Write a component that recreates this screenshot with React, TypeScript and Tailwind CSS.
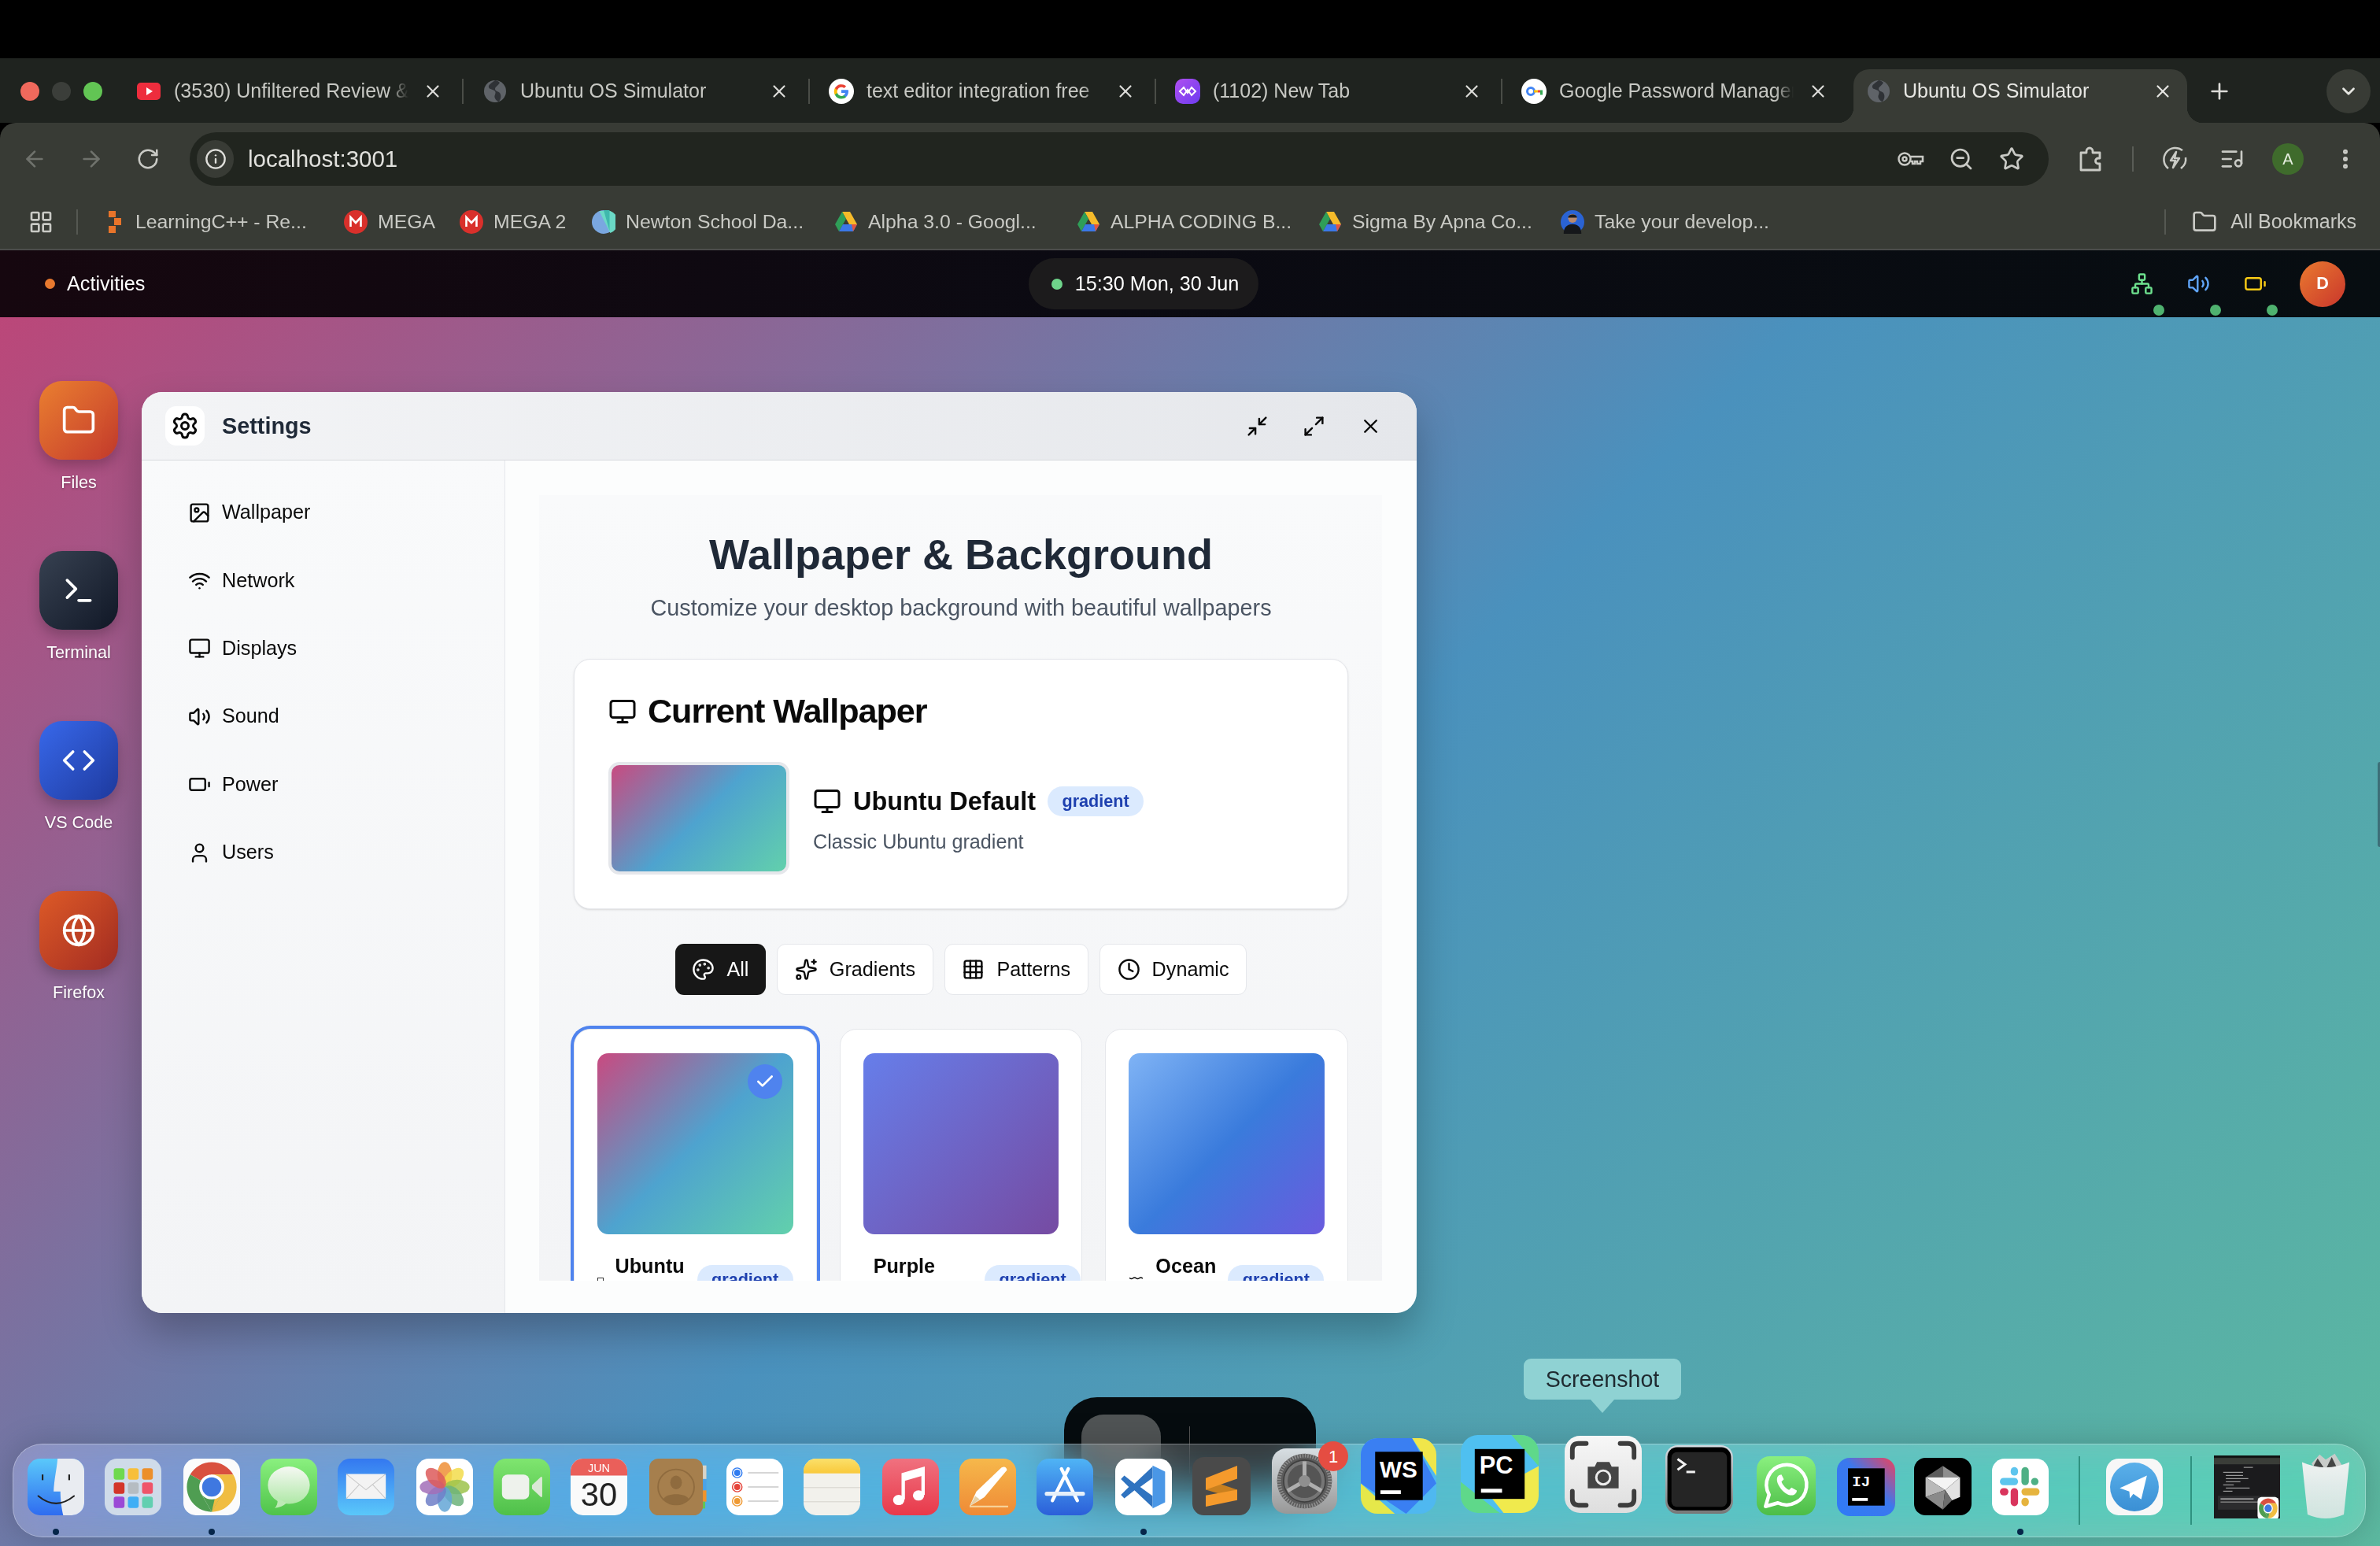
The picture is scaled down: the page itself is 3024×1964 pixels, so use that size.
import React from "react";
import {
  ArrowLeft, ArrowRight, RotateCw, Info, Star, ZoomOut, ListMusic, EllipsisVertical, Plus, X, ChevronDown,
  LayoutGrid, Folder, Network, Volume2, Battery, Terminal, Code, Globe, Settings, Minimize2, Maximize2,
  Image, Wifi, Monitor, User, Palette, Sparkles, Grid3x3, Clock, Check, Waves,
} from "lucide-react";

const S = ({ children }: { children: React.ReactNode }) => (
  <svg viewBox="0 0 100 100" preserveAspectRatio="none" className="block h-full w-full">{children}</svg>
);

const Yt = () => (
  <svg viewBox="0 0 30 30" className="h-[30px] w-[30px]"><rect x="0" y="4" width="30" height="22" rx="5" fill="#ee2d3d" /><path d="M12 10l8 5-8 5z" fill="#fff" /></svg>
);
const GlobeFav = () => (
  <svg viewBox="0 0 30 30" className="h-[30px] w-[30px]"><circle cx="15" cy="15" r="14" fill="#5f6368" /><path d="M15 1c-3 3-9 5-8 9 1 3 6 2 8 5s-2 5 0 9c1 2 3 4 5 4 3-4 3-8 1-11-2-2-6-2-6-5s4-4 6-8c-2-2-4-3-6-3z" fill="#2f3236" /></svg>
);
const GoogleFav = () => (
  <svg viewBox="0 0 32 32" className="h-[32px] w-[32px]"><circle cx="16" cy="16" r="16" fill="#fff" /><path d="M25 16.2c0-.7-.1-1.300-.2-1.900H16v3.600h5a4.300 4.300 0 0 1-1.900 2.800v2.300h3c1.800-1.600 2.900-4 2.900-6.800z" fill="#4285f4" /><path d="M16 25.500c2.500 0 4.600-.8 6.100-2.200l-3-2.300c-.8.600-1.900.9-3.100.9-2.400 0-4.400-1.600-5.100-3.800H7.800v2.400a9.200 9.200 0 0 0 8.200 5z" fill="#34a853" /><path d="M10.900 18.100a5.500 5.500 0 0 1 0-3.600v-2.400H7.800a9.200 9.200 0 0 0 0 8.400z" fill="#fbbc05" /><path d="M16 10.700c1.300 0 2.500.5 3.500 1.400l2.600-2.600A9.200 9.200 0 0 0 7.800 12.100l3.100 2.400c.7-2.200 2.700-3.800 5.100-3.800z" fill="#ea4335" /></svg>
);
const PurpleFav = () => (
  <svg viewBox="0 0 32 32" className="h-[32px] w-[32px]"><defs><linearGradient id="pf" x1="0" y1="0" x2="1" y2="1"><stop stopColor="#b04ff0" /><stop offset="1" stopColor="#6d3cf0" /></linearGradient></defs><rect width="32" height="32" rx="10" fill="url(#pf)" /><path d="M6 16l5-5 5 7 5-7 5 5-5 5-5-7-5 7z" fill="none" stroke="#fff" strokeWidth="2" /></svg>
);
const PwFav = () => (
  <svg viewBox="0 0 32 32" className="h-[32px] w-[32px]"><circle cx="16" cy="16" r="16" fill="#fff" /><circle cx="12" cy="16" r="4.500" fill="none" stroke="#4285f4" strokeWidth="3" /><rect x="16" y="14.500" width="5" height="3" fill="#fbbc05" /><rect x="21" y="14.500" width="3" height="3" fill="#ea4335" /><rect x="24" y="14.500" width="3" height="6" fill="#34a853" /></svg>
);

const Tab = ({ icon, text, last }: { icon: React.ReactNode; text: string; last?: boolean }) => (
  <div className="flex h-[56px] w-[440px] shrink-0 items-center pl-[24px]">
    <div className="flex w-[32px] shrink-0 justify-center">{icon}</div>
    <div className="ml-[16px] w-[298px] overflow-hidden whitespace-nowrap text-[25px] text-[#c7c8c3] [mask-image:linear-gradient(90deg,#000_92%,transparent)]">{text}</div>
    <X size={26} strokeWidth={2} className="ml-[18px] shrink-0 text-[#dcdcd8]" />
    <div className={last ? "ml-[24px] h-[32px] w-[2px]" : "ml-[24px] h-[32px] w-[2px] bg-[#4a4d47]"} />
  </div>
);

const TabStrip = () => (
  <div className="flex h-[82px] shrink-0 items-start bg-[#1f231f] pt-[14px]">
    <div className="flex h-[56px] items-center gap-[16px] pl-[26px]">
      <span className="h-[24px] w-[24px] rounded-full bg-[#f0695c]" />
      <span className="h-[24px] w-[24px] rounded-full bg-[#3b3e3a]" />
      <span className="h-[24px] w-[24px] rounded-full bg-[#62c554]" />
    </div>
    <div className="ml-[19px] flex">
      <Tab icon={<Yt />} text="(3530) Unfiltered Review & Analysis" />
      <Tab icon={<GlobeFav />} text="Ubuntu OS Simulator" />
      <Tab icon={<GoogleFav />} text="text editor integration free" />
      <Tab icon={<PurpleFav />} text="(1102) New Tab" />
      <Tab icon={<PwFav />} text="Google Password Manager" last />
    </div>
    <div className="relative ml-[6px] flex h-[68px] w-[424px] shrink-0 items-start rounded-t-[20px] bg-[#383b35] pl-[17px]">
      <span className="absolute -left-[20px] bottom-0 h-[20px] w-[20px] bg-[radial-gradient(circle_at_0_0,transparent_20px,#383b35_20.500px)]" />
      <span className="absolute -right-[20px] bottom-0 h-[20px] w-[20px] bg-[radial-gradient(circle_at_100%_0,transparent_20px,#383b35_20.500px)]" />
      <div className="flex h-[56px] items-center">
        <GlobeFav />
        <div className="ml-[16px] w-[300px] whitespace-nowrap text-[25px] text-[#e6e6e2]">Ubuntu OS Simulator</div>
        <X size={26} strokeWidth={2} className="ml-[17px] text-[#e6e6e2]" />
      </div>
    </div>
    <div className="ml-[25px] flex h-[56px] items-center"><Plus size={32} strokeWidth={2} className="text-[#dcdcd8]" /></div>
    <div className="ml-auto mr-[12px] flex h-[56px] w-[56px] items-center justify-center rounded-full bg-[#383b35]"><ChevronDown size={26} strokeWidth={2.500} className="text-[#e6e6e2]" /></div>
  </div>
);

const IconBox = ({ children, className }: { children: React.ReactNode; className?: string }) => (
  <div className={"flex h-[64px] w-[64px] shrink-0 items-center justify-center text-[#c9cac5] " + (className || "")}>{children}</div>
);

const KeyIcon = () => (
  <svg viewBox="0 0 36 36" className="h-[36px] w-[36px]" fill="none" stroke="currentColor" strokeWidth="2.500"><circle cx="10" cy="18" r="7.500" /><circle cx="10" cy="18" r="2.500" /><path d="M17.500 15H33v6h-3v3h-4v-3h-3v3h-3v-3h-2.500" /></svg>
);
const PuzzleIcon = () => (
  <svg viewBox="0 0 36 36" className="h-[36px] w-[36px]" fill="none" stroke="currentColor" strokeWidth="2.800"><path d="M6 10h7v-2a4 4 0 0 1 8 0v2h9v7h-2a3.500 3.500 0 0 0 0 7h2v8H6z" strokeLinejoin="round" /></svg>
);
const BoltIcon = () => (
  <svg viewBox="0 0 36 36" className="h-[36px] w-[36px]" fill="none" stroke="currentColor" strokeWidth="2.500"><path d="M10 30A14 14 0 0 1 28 7M26 30l1-1A14 14 0 0 0 32 16" /><path d="M20 9l-7 11h6l-3 9 8-12h-6z" strokeLinejoin="round" /></svg>
);

const Drive = () => (
  <svg viewBox="0 0 30 28" className="h-[28px] w-[30px]"><path d="M10 1h10l9 16H19z" fill="#f6bb2a" /><path d="M10 1L1 17l5 9 9-16z" fill="#2f9e58" /><path d="M6 26h18l5-9H11z" fill="#3b78e7" /><path d="M24 26l5-9h-7z" fill="#e4553f" /></svg>
);
const Mega = () => (
  <svg viewBox="0 0 30 30" className="h-[30px] w-[30px]"><circle cx="15" cy="15" r="15" fill="#d9302b" /><path d="M8.500 21V9l6.500 7 6.500-7v12" fill="none" stroke="#fff" strokeWidth="2.600" /></svg>
);
const Learn = () => (
  <svg viewBox="0 0 30 30" className="h-[30px] w-[30px]"><rect x="9" y="1" width="9" height="8" fill="#e8742a" /><rect x="16" y="10" width="9" height="9" fill="#e8742a" /><rect x="9" y="20" width="9" height="9" fill="#e8742a" /></svg>
);
const Newton = () => (
  <svg viewBox="0 0 32 32" className="h-[32px] w-[32px]"><circle cx="16" cy="16" r="16" fill="#7aa7e0" /><path d="M10 1L25 31a16 16 0 0 0 0-30z" fill="#6bd9c6" /><path d="M16 0h8v28z" fill="#3fb8ad" /></svg>
);
const Person = () => (
  <svg viewBox="0 0 32 32" className="h-[32px] w-[32px]"><circle cx="16" cy="16" r="16" fill="#2a63d4" /><path d="M4 32c0-9 5-13 12-13s12 4 12 13z" fill="#15171a" /><circle cx="16" cy="11" r="6" fill="#b98a6e" /><path d="M10 10c0-5 12-6 12 0z" fill="#1b1b1b" /></svg>
);

const Bm = ({ icon, text, className }: { icon: React.ReactNode; text: string; className: string }) => (
  <div className={"flex shrink-0 items-center " + className}>
    <div className="flex w-[30px] shrink-0 justify-center">{icon}</div>
    <span className="ml-[13px] whitespace-nowrap text-[24.800px] text-[#c9cac5]">{text}</span>
  </div>
);

const Toolbar = () => (
  <div className="h-[162px] shrink-0 rounded-t-[20px] border-b-2 border-[#4c4d4b] bg-[#383b35] pt-[12px]">
    <div className="flex h-[68px] items-center pl-[8px]">
      <div className="flex h-[64px] w-[72px] items-center justify-center text-[#6f726c]"><ArrowLeft size={32} strokeWidth={2} /></div>
      <div className="flex h-[64px] w-[72px] items-center justify-center text-[#6f726c]"><ArrowRight size={32} strokeWidth={2} /></div>
      <div className="flex h-[64px] w-[72px] items-center justify-center text-[#c9cac5]"><RotateCw size={30} strokeWidth={2} /></div>
      <div className="ml-[17px] flex h-[68px] w-[2362px] items-center rounded-full bg-[#21251f] pl-[9px] pr-[15px]">
        <div className="flex h-[48px] w-[47px] items-center justify-center rounded-full bg-[#383b35] text-[#e0e0dc]"><Info size={28} strokeWidth={2} /></div>
        <span className="ml-[18px] text-[29.500px] text-[#e0e0dc]">localhost:3001</span>
        <div className="ml-auto flex">
          <IconBox><KeyIcon /></IconBox>
          <IconBox><ZoomOut size={32} strokeWidth={2} /></IconBox>
          <IconBox><Star size={32} strokeWidth={2} /></IconBox>
        </div>
      </div>
      <IconBox className="ml-[21px]"><PuzzleIcon /></IconBox>
      <div className="ml-[21px] h-[32px] w-[2px] bg-[#5a5d57]" />
      <IconBox className="ml-[20px]"><BoltIcon /></IconBox>
      <IconBox className="ml-[9px]"><ListMusic size={32} strokeWidth={2} /></IconBox>
      <div className="ml-[19px] flex h-[40px] w-[40px] shrink-0 items-center justify-center rounded-full bg-[#3f6b2c] text-[20px] text-[#e6efe0]">A</div>
      <div className="ml-[33px] flex w-[40px] justify-center text-[#c9cac5]"><EllipsisVertical size={32} strokeWidth={2.500} /></div>
    </div>
    <div className="mt-[12px] flex h-[68px] items-center pl-[36px]">
      <LayoutGrid size={32} strokeWidth={2} className="text-[#c9cac5]" />
      <div className="ml-[29px] mr-[30px] h-[32px] w-[2px] bg-[#555852]" />
      <Bm className="w-[308px]" icon={<Learn />} text="LearningC++ - Re..." />
      <Bm className="w-[147px]" icon={<Mega />} text="MEGA" />
      <Bm className="w-[168px]" icon={<Mega />} text="MEGA 2" />
      <Bm className="w-[308px]" icon={<Newton />} text="Newton School Da..." />
      <Bm className="w-[308px]" icon={<Drive />} text="Alpha 3.0 - Googl..." />
      <Bm className="w-[307px]" icon={<Drive />} text="ALPHA CODING B..." />
      <Bm className="w-[308px]" icon={<Drive />} text="Sigma By Apna Co..." />
      <Bm className="w-[300px]" icon={<Person />} text="Take your develop..." />
      <div className="ml-auto h-[32px] w-[2px] bg-[#555852]" />
      <Folder size={32} strokeWidth={2} className="ml-[33px] text-[#c9cac5]" />
      <span className="ml-[17px] mr-[30px] text-[25px] text-[#c9cac5]">All Bookmarks</span>
    </div>
  </div>
);

const StatusIcon = ({ children }: { children: React.ReactNode }) => (
  <div className="relative flex h-[40px] w-[72px] items-center justify-center">
    {children}
    <span className="absolute left-[51px] top-[46px] h-[14px] w-[14px] rounded-full bg-[#4fb26f]" />
  </div>
);

const TopBar = () => (
  <div className="flex h-[85px] shrink-0 items-center justify-between bg-[linear-gradient(90deg,#16070f,#0b0a12_45%,#070d11)] pl-[57px] pr-[44px] text-white">
    <div className="flex items-center gap-[15px] pr-[36px] text-[25.200px]">
      <span className="h-[13px] w-[13px] rounded-full bg-[#e8792f]" />
      <span>Activities</span>
    </div>
    <div className="flex h-[65px] w-[292px] items-center rounded-full bg-[#1c1b1c] pl-[29px] text-[25.200px]">
      <span className="h-[14px] w-[14px] rounded-full bg-[#6fd58b]" />
      <span className="ml-[16px] whitespace-nowrap">15:30 Mon, 30 Jun</span>
    </div>
    <div className="flex items-center">
      <StatusIcon><Network size={29} strokeWidth={2} className="text-[#6ee28f]" /></StatusIcon>
      <StatusIcon><Volume2 size={29} strokeWidth={2} className="text-[#60a5fa]" /></StatusIcon>
      <StatusIcon><Battery size={29} strokeWidth={2} className="text-[#facc15]" /></StatusIcon>
      <div className="ml-[21px] flex h-[58px] w-[58px] items-center justify-center rounded-full bg-[linear-gradient(135deg,#ea7a2f,#c9362c)] text-[21.600px] font-bold">D</div>
    </div>
  </div>
);

const DeskIcon = ({ label, tile, children }: { label: string; tile: string; children: React.ReactNode }) => (
  <div className="flex w-[100px] flex-col items-center">
    <div className={"flex h-[100px] w-[100px] items-center justify-center rounded-[29px] text-white shadow-[0_8px_16px_rgba(0,0,0,0.22)] " + tile}>{children}</div>
    <div className="mt-[14px] h-[30px] whitespace-nowrap text-[21.600px] leading-[30px] text-white [text-shadow:0_1px_3px_rgba(0,0,0,0.35)]">{label}</div>
  </div>
);

const MenuItem = ({ icon, label }: { icon: React.ReactNode; label: string }) => (
  <div className="flex h-[86.400px] items-center gap-[14px] pl-[59px] text-[25.200px] text-[#0a0a0a]">
    {icon}
    <span>{label}</span>
  </div>
);

const FilterBtn = ({ icon, label, active }: { icon: React.ReactNode; label: string; active?: boolean }) => (
  <div className={active
    ? "flex h-[65px] items-center gap-[15px] rounded-[11px] bg-[#171717] px-[21.500px] text-[25.200px] text-white"
    : "flex h-[65px] items-center gap-[15px] rounded-[11px] border border-[#e5e7eb] bg-white px-[21.500px] text-[25.200px] text-[#0a0a0a]"}>
    {icon}
    <span>{label}</span>
  </div>
);

const Badge = ({ className }: { className?: string }) => (
  <div className={"flex h-[38px] w-[122px] shrink-0 items-center justify-center rounded-full bg-[#dbeafe] text-[21.600px] font-bold text-[#1e40af] " + (className || "")}>gradient</div>
);

const SettingsWindow = () => (
  <div className="absolute left-[180px] top-[95px] flex h-[1170px] w-[1620px] flex-col overflow-hidden rounded-[26px] bg-[#fcfdfd] shadow-[0_25px_50px_rgba(0,0,0,0.25)]">
    <div className="flex h-[87px] shrink-0 items-center border-b border-[#d8dade] bg-[linear-gradient(90deg,#f3f4f6,#e5e7eb)] pl-[30px] pr-[23px]">
      <div className="flex h-[50px] w-[50px] items-center justify-center rounded-[14px] bg-white text-[#0a0a0a]"><Settings size={36} strokeWidth={2} /></div>
      <div className="ml-[22px] pt-[2px] text-[28.800px] font-bold text-[#1f2937]">Settings</div>
      <div className="ml-auto flex text-[#0a0a0a]">
        <div className="flex w-[72px] justify-center"><Minimize2 size={29} strokeWidth={2} /></div>
        <div className="flex w-[72px] justify-center"><Maximize2 size={29} strokeWidth={2} /></div>
        <div className="flex w-[72px] justify-center"><X size={29} strokeWidth={2} /></div>
      </div>
    </div>
    <div className="flex min-h-0 flex-1">
      <div className="w-[462px] shrink-0 border-r border-[#e5e7eb] bg-[linear-gradient(180deg,#f9fafb,#f3f4f6)] pt-[23px]">
        <MenuItem icon={<Image size={29} strokeWidth={2} />} label="Wallpaper" />
        <MenuItem icon={<Wifi size={29} strokeWidth={2} />} label="Network" />
        <MenuItem icon={<Monitor size={29} strokeWidth={2} />} label="Displays" />
        <MenuItem icon={<Volume2 size={29} strokeWidth={2} />} label="Sound" />
        <MenuItem icon={<Battery size={29} strokeWidth={2} />} label="Power" />
        <MenuItem icon={<User size={29} strokeWidth={2} />} label="Users" />
      </div>
      <div className="flex min-w-0 flex-1 flex-col pb-[41px] pl-[43px] pr-[44px] pt-[44px]">
        <div className="min-h-0 flex-1 overflow-hidden bg-[linear-gradient(180deg,#f9fafb,#f3f4f6)] pl-[44px] pr-[43px] pt-[43px]">
          <h1 className="text-center text-[54px] font-bold leading-[65px] text-[#1f2937]">Wallpaper &amp; Background</h1>
          <p className="mt-[13px] text-center text-[28.800px] leading-[44px] text-[#4b5563]">Customize your desktop background with beautiful wallpapers</p>
          <div className="mt-[43px] h-[318px] rounded-[21px] border border-[#e5e7eb] bg-white pl-[43px] pt-[44px] shadow-sm">
            <div className="flex h-[43px] items-center gap-[14px]">
              <Monitor size={36} strokeWidth={2} className="text-[#0a0a0a]" />
              <span className="text-[43.200px] font-bold leading-[43px] tracking-tight text-[#0a0a0a]">Current Wallpaper</span>
            </div>
            <div className="mt-[43px] flex gap-[30px]">
              <div className="h-[143px] w-[230px] rounded-[14px] border-[4px] border-[#e5e7eb] bg-[linear-gradient(135deg,#c94a80,#4ea3cf_50%,#62d0ac)]" />
              <div className="pt-[31px]">
                <div className="flex h-[38px] items-center">
                  <Monitor size={36} strokeWidth={2} className="text-[#0a0a0a]" />
                  <span className="ml-[15px] text-[32.400px] font-bold text-[#0a0a0a]">Ubuntu Default</span>
                  <Badge className="ml-[15px]" />
                </div>
                <div className="mt-[14px] text-[25.200px] leading-[36px] text-[#4b5563]">Classic Ubuntu gradient</div>
              </div>
            </div>
          </div>
          <div className="mt-[44px] flex justify-center gap-[14.400px]">
            <FilterBtn active icon={<Palette size={29} strokeWidth={2} />} label="All" />
            <FilterBtn icon={<Sparkles size={29} strokeWidth={2} />} label="Gradients" />
            <FilterBtn icon={<Grid3x3 size={29} strokeWidth={2} />} label="Patterns" />
            <FilterBtn icon={<Clock size={29} strokeWidth={2} />} label="Dynamic" />
          </div>
          <div className="mt-[43px] grid grid-cols-3 gap-[29px]">
            <div className="h-[400px] rounded-[21px] border border-[#e5e7eb] bg-white px-[29px] pt-[30px] ring-4 ring-[#4f83ee]">
              <div className="relative h-[230px] rounded-[14px] bg-[linear-gradient(135deg,#c94a80,#4ea3cf_50%,#62d0ac)]">
                <div className="absolute right-[14px] top-[14px] flex h-[44px] w-[44px] items-center justify-center rounded-full bg-[#4f83ee] text-white"><Check size={26} strokeWidth={2.500} /></div>
              </div>
              <div className="mt-[24px] flex items-start">
                <div className="mt-[31px] h-[14px] w-[8px] border border-[#333]" />
                <span className="ml-[15px] text-[25.200px] font-bold leading-[32px] text-[#0a0a0a]">Ubuntu</span>
                <Badge className="ml-[16px] mt-[15px]" />
              </div>
            </div>
            <div className="h-[400px] rounded-[21px] border border-[#e5e7eb] bg-white px-[29px] pt-[30px]">
              <div className="h-[230px] rounded-[14px] bg-[linear-gradient(135deg,#667eea,#764ba2)]" />
              <div className="mt-[24px] flex items-start">
                <span className="ml-[13px] text-[25.200px] font-bold leading-[32px] text-[#0a0a0a]">Purple</span>
                <Badge className="ml-[63px] mt-[15px]" />
              </div>
            </div>
            <div className="h-[400px] rounded-[21px] border border-[#e5e7eb] bg-white px-[29px] pt-[30px]">
              <div className="h-[230px] rounded-[14px] bg-[linear-gradient(135deg,#7fb3f5,#3a7bdc_50%,#6a5bde)]" />
              <div className="mt-[24px] flex items-start">
                <Waves size={19} strokeWidth={2} className="mt-[27px] text-[#0a0a0a]" />
                <span className="ml-[15px] text-[25.200px] font-bold leading-[32px] text-[#0a0a0a]">Ocean</span>
                <Badge className="ml-[15px] mt-[15px]" />
              </div>
            </div>
          </div>
        </div>
      </div>
    </div>
  </div>
);

const ChromeLogo = () => (
  <>
    <path d="M12 28A44 44 0 0 1 88 28L50 28 31 39z" fill="#d9503f" />
    <path d="M12 28L31 39V61L50 94A44 44 0 0 1 12 28z" fill="#4f9d52" />
    <path d="M88 28L50 28 69 61 50 94A44 44 0 0 0 88 28z" fill="#f0bd42" />
    <path d="M31 61L50 94 69 61 50 40z" fill="#4f9d52" />
    <path d="M69 61L50 94 60 50z" fill="#f0bd42" />
    <circle cx="50" cy="50" r="22" fill="#fff" />
    <circle cx="50" cy="50" r="17" fill="#3f78e0" />
  </>
);

const dockFont = "'Liberation Sans', Arial, sans-serif";

const Finder = () => (
  <S>
    <defs><linearGradient id="fi" x1="0" y1="0" x2="0" y2="1"><stop stopColor="#5ac8fa" /><stop offset="1" stopColor="#2f6cf0" /></linearGradient></defs>
    <rect width="100" height="100" rx="22" fill="url(#fi)" />
    <path d="M53 0H78A22 22 0 0 1 100 22V78A22 22 0 0 1 78 100H63C60 88 58 72 58 58H46C47 36 52 16 53 0Z" fill="#e9ecf1" />
    <rect x="25" y="28" width="3" height="10" fill="#222" /><rect x="72" y="28" width="3" height="10" fill="#222" />
    <path d="M19 66Q50 92 82 66" fill="none" stroke="#222" strokeWidth="3" strokeLinecap="round" />
  </S>
);
const Launchpad = () => {
  const c = ["#6fd94f", "#f7bf3a", "#ec8f2a", "#d3352a", "#b5bcc2", "#ef5469", "#9b4ad6", "#40aef5", "#62cfb0"];
  return (
    <S>
      <rect width="100" height="100" rx="22" fill="#cfdbe9" />
      {c.map((f, i) => <rect key={f} x={16 + (i % 3) * 25} y={17 + Math.floor(i / 3) * 25} width="19" height="20" rx="4" fill={f} />)}
    </S>
  );
};
const ChromeIcon = () => (<S><rect width="100" height="100" rx="22" fill="#fbfbfb" /><ChromeLogo /></S>);
const Messages = () => (
  <S>
    <defs><linearGradient id="me" x1="0" y1="0" x2="0" y2="1"><stop stopColor="#8af07f" /><stop offset="1" stopColor="#4fc34a" /></linearGradient><linearGradient id="me2" x1="0" y1="0" x2="0" y2="1"><stop stopColor="#f6f8f3" /><stop offset="1" stopColor="#aee8a6" /></linearGradient></defs>
    <rect width="100" height="100" rx="22" fill="url(#me)" />
    <ellipse cx="50" cy="47" rx="37" ry="33" fill="url(#me2)" />
    <path d="M30 70Q31 82 25 87Q38 86 46 78Z" fill="#bdeab5" />
  </S>
);
const Mail = () => (
  <S>
    <defs><linearGradient id="ma" x1="0" y1="0" x2="0" y2="1"><stop stopColor="#3478f0" /><stop offset="1" stopColor="#5ac8fa" /></linearGradient></defs>
    <rect width="100" height="100" rx="22" fill="url(#ma)" />
    <rect x="15" y="27" width="70" height="44" rx="3" fill="#f3f3f3" />
    <path d="M15 27L50 55 85 27M15 71L38 46M85 71L62 46" fill="none" stroke="#c9c9c9" strokeWidth="1.500" />
  </S>
);
const Photos = () => {
  const c = ["#ee8f36", "#f2dc4b", "#9cc34b", "#6cb37a", "#64a6d6", "#6f7fc8", "#a26fb8", "#dd5b5b"];
  return (
    <S>
      <rect width="100" height="100" rx="22" fill="#fff" />
      {c.map((f, i) => <ellipse key={f} cx="50" cy="28" rx="13" ry="22" fill={f} opacity="0.85" transform={`rotate(${i * 45} 50 50)`} />)}
    </S>
  );
};
const Facetime = () => (
  <S>
    <defs><linearGradient id="ft" x1="0" y1="0" x2="0" y2="1"><stop stopColor="#7fe56f" /><stop offset="1" stopColor="#4fc04a" /></linearGradient></defs>
    <rect width="100" height="100" rx="22" fill="url(#ft)" />
    <rect x="15" y="28" width="48" height="44" rx="10" fill="#eef2ec" />
    <path d="M68 47L84 32Q86 31 86 35V65Q86 69 84 68L68 53Z" fill="#dbe8d6" />
  </S>
);
const Calendar = () => (
  <S>
    <rect width="100" height="100" rx="22" fill="#fafafa" />
    <path d="M0 30V22A22 22 0 0 1 22 0H78A22 22 0 0 1 100 22V30Z" fill="#ea5f5a" />
    <text x="50" y="24" textAnchor="middle" fontSize="20" fill="#fff" fontFamily={dockFont}>JUN</text>
    <text x="50" y="84" textAnchor="middle" fontSize="58" fill="#222" fontFamily={dockFont}>30</text>
  </S>
);
const Contacts = () => (
  <S>
    <rect x="86" y="12" width="12" height="24" fill="#d8d4c8" /><rect x="86" y="36" width="12" height="20" fill="#4aa3e8" /><rect x="86" y="56" width="12" height="20" fill="#f0932c" /><rect x="86" y="76" width="10" height="12" fill="#62c554" />
    <rect width="92" height="100" rx="16" fill="#a67f4d" />
    <circle cx="46" cy="50" r="31" fill="none" stroke="#8f6b3e" strokeWidth="2.500" />
    <ellipse cx="46" cy="42" rx="10" ry="12" fill="#8f6b3e" />
    <path d="M24 72C28 60 64 60 68 72A31 31 0 0 1 24 72Z" fill="#8f6b3e" />
  </S>
);
const Reminders = () => (
  <S>
    <rect width="100" height="100" rx="22" fill="#fff" />
    {[["#2f7bf0", 25], ["#e5443a", 50], ["#ef9a34", 75]].map(([f, y]) => (
      <g key={String(y)}><circle cx="19" cy={y as number} r="8.500" fill="#fff" stroke={f as string} strokeWidth="2" /><circle cx="19" cy={y as number} r="5.500" fill={f as string} /><rect x="38" y={(y as number) - 1} width="54" height="2" fill="#c6c6c6" /></g>
    ))}
  </S>
);
const Notes = () => (
  <S>
    <defs><linearGradient id="no" x1="0" y1="0" x2="0" y2="1"><stop stopColor="#fbe06a" /><stop offset="1" stopColor="#f9c93b" /></linearGradient></defs>
    <rect width="100" height="100" rx="22" fill="#f2f1ec" />
    <path d="M0 26V22A22 22 0 0 1 22 0H78A22 22 0 0 1 100 22V26Z" fill="url(#no)" />
    <rect y="50" width="100" height="2" fill="#dedcd6" /><rect y="75" width="100" height="2" fill="#dedcd6" />
  </S>
);
const Music = () => (
  <S>
    <defs><linearGradient id="mu" x1="0" y1="0" x2="0" y2="1"><stop stopColor="#f0717f" /><stop offset="1" stopColor="#e8394a" /></linearGradient></defs>
    <rect width="100" height="100" rx="22" fill="url(#mu)" />
    <path d="M37 72V28L72 18V64" fill="none" stroke="#fff" strokeWidth="6" />
    <path d="M37 28L72 18V30L37 40Z" fill="#fff" />
    <ellipse cx="29" cy="73" rx="10" ry="9" fill="#fff" /><ellipse cx="64" cy="65" rx="10" ry="9" fill="#fff" />
  </S>
);
const Pages = () => (
  <S>
    <defs><linearGradient id="pa" x1="0" y1="0" x2="0" y2="1"><stop stopColor="#f6b84b" /><stop offset="1" stopColor="#ef8a36" /></linearGradient></defs>
    <rect width="100" height="100" rx="22" fill="url(#pa)" />
    <path d="M18 84L30 58 74 16Q82 12 84 20L44 68Z" fill="#fff" />
    <path d="M18 84L28 66 36 72Z" fill="#e6d0a5" />
    <rect x="18" y="83" width="68" height="3" fill="#f8d39a" />
  </S>
);
const AppStore = () => (
  <S>
    <defs><linearGradient id="as" x1="0" y1="0" x2="0" y2="1"><stop stopColor="#4fb4f5" /><stop offset="1" stopColor="#2b5fd9" /></linearGradient></defs>
    <rect width="100" height="100" rx="22" fill="url(#as)" />
    <path d="M44 18L72 74M56 18L28 74" stroke="#fff" strokeWidth="6" strokeLinecap="round" />
    <path d="M18 62H82" stroke="#e6f0fa" strokeWidth="7" strokeLinecap="round" />
  </S>
);
const VsCode = () => (
  <S>
    <rect width="100" height="100" rx="22" fill="#fff" />
    <path d="M66 14L34 44 16 30 10 36 24 50 10 64 16 70 34 56 66 86V66L44 50 66 34Z" fill="#2f73c0" />
    <path d="M66 12L88 23V77L66 88Z" fill="#4a97e6" />
  </S>
);
const Sublime = () => (
  <S>
    <rect width="100" height="100" rx="20" fill="#4a4a4a" />
    <path d="M23 38L77 56V72L23 56Z" fill="#c9801f" />
    <path d="M77 15L23 36V56L77 37Z" fill="#f59a2c" />
    <path d="M77 56L23 66V85L77 74Z" fill="#f59a2c" />
  </S>
);
const SysPrefs = () => (
  <S>
    <defs><linearGradient id="sy" x1="0" y1="0" x2="0" y2="1"><stop stopColor="#d7dee2" /><stop offset="1" stopColor="#989898" /></linearGradient></defs>
    <rect width="100" height="100" rx="22" fill="url(#sy)" />
    <circle cx="50" cy="50" r="42" fill="#5b5b5b" />
    <circle cx="50" cy="50" r="39" fill="none" stroke="#8e8e8e" strokeWidth="6" strokeDasharray="2 2" />
    <circle cx="50" cy="50" r="32" fill="#767676" stroke="#3f3f3f" strokeWidth="2" />
    <circle cx="50" cy="50" r="26" fill="#555" />
    <path d="M50 50V20M50 50L24 65M50 50L76 65" stroke="#aeaeae" strokeWidth="6" />
    <circle cx="50" cy="50" r="9" fill="#8f8f8f" />
  </S>
);
const Ws = () => (
  <S>
    <defs><clipPath id="wc"><rect width="100" height="100" rx="22" /></clipPath></defs>
    <g clipPath="url(#wc)">
      <rect width="100" height="100" fill="#4fb8f0" />
      <path d="M0 0H68L100 60 60 100 0 60Z" fill="#3a7ff2" />
      <path d="M68 0H100V50Z" fill="#f0e64a" />
      <path d="M0 60L45 100H0Z" fill="#e6e84a" />
    </g>
    <rect x="19" y="18" width="63" height="64" fill="#000" />
    <text x="50" y="52" textAnchor="middle" fontSize="31" fontWeight="700" fill="#fff" fontFamily={dockFont}>WS</text>
    <rect x="26" y="69" width="27" height="5" fill="#fff" />
  </S>
);
const Pc = () => (
  <S>
    <defs><clipPath id="pc"><rect width="100" height="100" rx="22" /></clipPath></defs>
    <g clipPath="url(#pc)">
      <rect width="100" height="100" fill="#4fc0f0" />
      <path d="M65 0H100V40Z" fill="#5fd88a" />
      <path d="M100 40V100H55L35 75Z" fill="#f0ea4d" />
      <path d="M0 60L50 100H0Z" fill="#5fd88a" />
    </g>
    <rect x="18" y="18" width="64" height="64" fill="#000" />
    <text x="24" y="50" fontSize="31" fontWeight="700" fill="#fff" fontFamily={dockFont}>PC</text>
    <rect x="26" y="69" width="27" height="5" fill="#fff" />
  </S>
);
const Shot = () => (
  <S>
    <defs><linearGradient id="sh" x1="0" y1="0" x2="0" y2="1"><stop stopColor="#f7f7f7" /><stop offset="1" stopColor="#dedede" /></linearGradient></defs>
    <rect width="100" height="100" rx="20" fill="url(#sh)" />
    <path d="M10 28V18Q10 10 18 10H28M72 10H82Q90 10 90 18V28M10 72V82Q10 90 18 90H28M72 90H82Q90 90 90 82V72" fill="none" stroke="#3d3d3d" strokeWidth="6" strokeLinecap="round" />
    <path d="M30 40H39L42 34H58L61 40H70V68H30Z" fill="#454545" />
    <circle cx="50" cy="54" r="9" fill="none" stroke="#ededed" strokeWidth="3" />
  </S>
);
const TermDock = () => (
  <S>
    <defs><linearGradient id="te" x1="0" y1="0" x2="0" y2="1"><stop stopColor="#d5dce2" /><stop offset="1" stopColor="#777" /></linearGradient></defs>
    <rect width="100" height="100" rx="18" fill="url(#te)" />
    <rect x="3" y="3" width="94" height="92" rx="14" fill="#000" />
    <rect x="9" y="10" width="82" height="80" rx="8" fill="#252525" />
    <path d="M18 20L29 28 18 36" fill="none" stroke="#f2f2f2" strokeWidth="3.500" />
    <path d="M31 39H44" stroke="#f2f2f2" strokeWidth="3.500" />
  </S>
);
const WhatsApp = () => (
  <S>
    <defs><linearGradient id="wa" x1="0" y1="0" x2="0" y2="1"><stop stopColor="#8af07f" /><stop offset="1" stopColor="#4cbd47" /></linearGradient></defs>
    <rect width="100" height="100" rx="22" fill="url(#wa)" />
    <path d="M15 85L21 65A34 34 0 1 1 36 79Z" fill="none" stroke="#fff" strokeWidth="6" strokeLinejoin="round" />
    <path d="M38 32c-5 3-5 11 1 20 6 10 15 15 22 14 4-1 7-4 7-8l-9-5-4 4c-4-1-11-8-13-14l4-4-4-8z" fill="#fff" />
  </S>
);
const Ij = () => (
  <S>
    <defs><linearGradient id="ij" x1="0" y1="1" x2="1" y2="0"><stop stopColor="#2f7bf6" /><stop offset="0.55" stopColor="#3b78ee" /><stop offset="1" stopColor="#f0415a" /></linearGradient></defs>
    <rect width="100" height="100" rx="22" fill="url(#ij)" />
    <rect x="19" y="18" width="63" height="64" fill="#000" />
    <text x="26" y="49" fontSize="26" fontWeight="700" fill="#fff" fontFamily="'Liberation Mono', monospace">IJ</text>
    <rect x="26" y="69" width="27" height="5" fill="#fff" />
  </S>
);
const Gem = () => (
  <S>
    <rect width="100" height="100" rx="20" fill="#000" />
    <path d="M50 14L20 34H50Z" fill="#5c5c5c" />
    <path d="M50 14L80 34H50Z" fill="#8e8e8e" />
    <path d="M20 34H80L54 56Z" fill="#f4f4f4" />
    <path d="M20 34L54 56 20 68Z" fill="#b9b9b9" />
    <path d="M80 34L54 56 66 74 80 68Z" fill="#e2e2e2" />
    <path d="M20 68L54 56 50 90Z" fill="#8a8a8a" />
    <path d="M54 56L66 74 50 90Z" fill="#6d6d6d" />
  </S>
);
const Slack = () => (
  <S>
    <rect width="100" height="100" rx="22" fill="#fff" />
    <rect x="14" y="34" width="32" height="13" rx="6.500" fill="#5ec5ee" /><rect x="33" y="15" width="13" height="15" rx="6.500" fill="#5ec5ee" />
    <rect x="52" y="15" width="13" height="32" rx="6.500" fill="#4eb085" /><rect x="69" y="34" width="13" height="13" rx="6.500" fill="#4eb085" />
    <rect x="33" y="52" width="13" height="32" rx="6.500" fill="#d9355d" /><rect x="14" y="52" width="15" height="13" rx="6.500" fill="#d9355d" />
    <rect x="52" y="52" width="32" height="13" rx="6.500" fill="#e6b43e" /><rect x="52" y="69" width="13" height="15" rx="6.500" fill="#e6b43e" />
  </S>
);
const Telegram = () => (
  <S>
    <defs><linearGradient id="tg" x1="0" y1="0" x2="0" y2="1"><stop stopColor="#5ab0ea" /><stop offset="1" stopColor="#3a8fd4" /></linearGradient></defs>
    <rect width="100" height="100" rx="22" fill="#f7f7f7" />
    <circle cx="50" cy="50" r="43" fill="url(#tg)" />
    <path d="M24 52L72 30 62 72 48 62 42 70 41 58Z" fill="#fff" />
  </S>
);
const Thumb = () => (
  <S>
    <rect width="100" height="100" fill="#1b1b1d" />
    <rect width="100" height="3" fill="#111" />
    <rect y="4" width="100" height="10" fill="#3a3d38" />
    <rect x="45" y="18" width="14" height="2" fill="#777" />
    <g fill="#9a9a9a">
      <rect x="14" y="26" width="30" height="1.500" /><rect x="18" y="31" width="26" height="1.500" /><rect x="18" y="36" width="34" height="1.500" /><rect x="18" y="41" width="22" height="1.500" /><rect x="14" y="46" width="16" height="1.500" /><rect x="18" y="51" width="36" height="1.500" /><rect x="14" y="56" width="14" height="1.500" />
    </g>
    <rect x="6" y="64" width="88" height="22" fill="#2c2c2e" />
    <rect x="10" y="68" width="50" height="2" fill="#aaa" />
    <rect x="10" y="73" width="60" height="2" fill="#777" />
    <g transform="translate(66 66) scale(0.32 0.36)"><rect width="100" height="100" rx="18" fill="#fff" /><ChromeLogo /></g>
  </S>
);
const Trash = () => (
  <S>
    <defs><linearGradient id="tr" x1="0" y1="0" x2="0" y2="1"><stop stopColor="#eef1f1" /><stop offset="1" stopColor="#e4e7e6" stopOpacity="0.85" /></linearGradient></defs>
    <path d="M22 16L38 2 50 10 68 1 82 18 70 26H30Z" fill="#c9cbc9" />
    <path d="M34 8L46 22H24ZM62 6L72 22H52Z" fill="#444" />
    <path d="M3 14Q50 30 97 14L86 94Q50 106 14 94Z" fill="url(#tr)" />
  </S>
);

const DockIcon = ({ className, dot, children }: { className: string; dot?: boolean; children: React.ReactNode }) => (
  <div className={"relative shrink-0 " + className}>
    {children}
    {dot && <span className="absolute -bottom-[25px] left-1/2 h-[8px] w-[8px] -translate-x-1/2 rounded-full bg-[#06264a]" />}
  </div>
);

const Dock = () => (
  <div className="absolute left-[16px] top-[1431px] flex h-[119px] w-[2990px] items-end rounded-[38px] border border-white/30 bg-white/20 pb-[27px] pl-[18px] shadow-[0_0_40px_rgba(0,0,0,0.18)] backdrop-blur-[28px] backdrop-saturate-[1.6]">
    <DockIcon dot className="h-[72px] w-[72px]"><Finder /></DockIcon>
    <DockIcon className="ml-[26px] h-[72px] w-[72px]"><Launchpad /></DockIcon>
    <DockIcon dot className="ml-[28px] h-[72px] w-[72px]"><ChromeIcon /></DockIcon>
    <DockIcon className="ml-[26px] h-[72px] w-[72px]"><Messages /></DockIcon>
    <DockIcon className="ml-[26px] h-[72px] w-[72px]"><Mail /></DockIcon>
    <DockIcon className="ml-[28px] h-[72px] w-[72px]"><Photos /></DockIcon>
    <DockIcon className="ml-[26px] h-[72px] w-[72px]"><Facetime /></DockIcon>
    <DockIcon className="ml-[26px] h-[72px] w-[72px]"><Calendar /></DockIcon>
    <DockIcon className="ml-[28px] h-[72px] w-[74px]"><Contacts /></DockIcon>
    <DockIcon className="ml-[24px] h-[72px] w-[72px]"><Reminders /></DockIcon>
    <DockIcon className="ml-[26px] h-[72px] w-[72px]"><Notes /></DockIcon>
    <DockIcon className="ml-[28px] h-[72px] w-[72px]"><Music /></DockIcon>
    <DockIcon className="ml-[26px] h-[72px] w-[72px]"><Pages /></DockIcon>
    <DockIcon className="ml-[26px] h-[72px] w-[72px]"><AppStore /></DockIcon>
    <DockIcon dot className="ml-[28px] h-[72px] w-[72px]"><VsCode /></DockIcon>
    <DockIcon className="ml-[26px] h-[74px] w-[74px]"><Sublime /></DockIcon>
    <DockIcon className="mb-[2px] ml-[27px] h-[83px] w-[83px]">
      <SysPrefs />
      <span className="absolute -right-[14px] -top-[9px] flex h-[38px] w-[38px] items-center justify-center rounded-full bg-[#e54d42] text-[22px] text-white">1</span>
    </DockIcon>
    <DockIcon className="mb-[2px] ml-[30px] h-[96px] w-[96px]"><Ws /></DockIcon>
    <DockIcon className="mb-[3px] ml-[31px] h-[99px] w-[99px]"><Pc /></DockIcon>
    <DockIcon className="mb-[3px] ml-[33px] h-[98px] w-[98px]"><Shot /></DockIcon>
    <DockIcon className="mb-[2px] ml-[30px] h-[87px] w-[86px]"><TermDock /></DockIcon>
    <DockIcon className="ml-[30px] h-[75px] w-[75px]"><WhatsApp /></DockIcon>
    <DockIcon className="-mb-[1px] ml-[27px] h-[74px] w-[74px]"><Ij /></DockIcon>
    <DockIcon className="ml-[24px] h-[73px] w-[73px]"><Gem /></DockIcon>
    <DockIcon dot className="ml-[26px] h-[72px] w-[72px]"><Slack /></DockIcon>
    <div className="-mb-[12px] ml-[38px] h-[87px] w-[2px] shrink-0 bg-[#2f9280]" />
    <DockIcon className="ml-[33px] h-[72px] w-[72px]"><Telegram /></DockIcon>
    <div className="-mb-[12px] ml-[35px] h-[87px] w-[2px] shrink-0 bg-[#2f9280]" />
    <DockIcon className="-mb-[4px] ml-[28px] h-[80px] w-[84px]"><Thumb /></DockIcon>
    <DockIcon className="-mb-[4px] ml-[26px] h-[83px] w-[64px]"><Trash /></DockIcon>
  </div>
);

export default function App() {
  return (
    <div className="flex h-[1964px] w-[3024px] flex-col overflow-hidden bg-black font-['Liberation_Sans',Arial,sans-serif]">
      <div className="h-[74px] shrink-0 bg-black" />
      <TabStrip />
      <Toolbar />
      <TopBar />
      <div className="relative min-h-0 flex-1 bg-[linear-gradient(135deg,#bb4779,#4a91bd_50%,#5cb9a0)]">
        <div className="flex flex-col gap-[72px] pl-[50px] pt-[81px]">
          <DeskIcon label="Files" tile="bg-[linear-gradient(135deg,#ea7f30,#c43a2c)]"><Folder size={44} strokeWidth={2} /></DeskIcon>
          <DeskIcon label="Terminal" tile="bg-[linear-gradient(135deg,#374151,#111827)]"><Terminal size={44} strokeWidth={2} /></DeskIcon>
          <DeskIcon label="VS Code" tile="bg-[linear-gradient(135deg,#3868ea,#1e3a9f)]"><Code size={44} strokeWidth={2} /></DeskIcon>
          <DeskIcon label="Firefox" tile="bg-[linear-gradient(135deg,#dd5a27,#a32c22)]"><Globe size={44} strokeWidth={2} /></DeskIcon>
        </div>
        <SettingsWindow />
        <div className="absolute right-0 top-[565px] h-[108px] w-[3px] rounded-l-[3px] bg-[#3d6f78]" />
        <div className="absolute left-[1352px] top-[1372px] h-[120px] w-[320px] rounded-[42px] bg-[#060c0f]">
          <div className="absolute left-[22px] top-[22px] h-[80px] w-[101px] rounded-[28px] bg-[#505455]" />
          <div className="absolute left-[159px] top-[37px] h-[60px] w-[1px] bg-[#555]" />
        </div>
        <div className="absolute left-[1936px] top-[1323px] flex h-[52px] w-[200px] items-center justify-center rounded-[9px] bg-[#8fd2d3] text-[28.600px] text-[#1f2a30]">
          Screenshot
          <span className="absolute -bottom-[17px] left-[85px] h-0 w-0 border-x-[15px] border-t-[17px] border-x-transparent border-t-[#8fd2d3]" />
        </div>
        <Dock />
      </div>
    </div>
  );
}
